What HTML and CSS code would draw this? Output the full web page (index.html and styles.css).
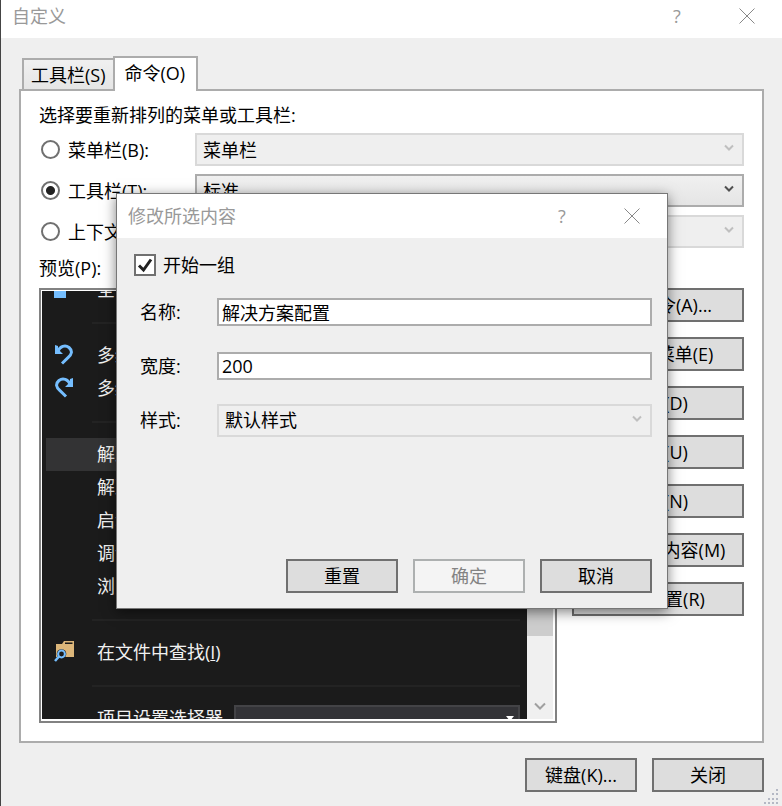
FILE: index.html
```html
<!DOCTYPE html>
<html lang="zh-CN">
<head>
<meta charset="utf-8">
<title>自定义</title>
<link rel="stylesheet" href="styles.css">
</head>
<body>
<main class="window">
  <header class="titlebar">
    <h1 class="title">自定义</h1>
    <button class="caption" type="button" aria-label="帮助">?</button>
    <button class="caption" type="button" aria-label="关闭窗口"><svg width="16" height="16" viewBox="0 0 16 16"><path d="M.5 .5l15 15M15.500 .5l-15 15"/></svg></button>
  </header>

  <div class="content">
    <div class="tabs" role="tablist">
      <button class="tab" type="button" role="tab" aria-selected="false">工具栏(S)</button>
      <button class="tab active" type="button" role="tab" aria-selected="true">命令(O)</button>
    </div>

    <section class="panel">
      <p class="heading">选择要重新排列的菜单或工具栏:</p>
      <div class="targets">
        <label class="choice"><input class="radio" type="radio" name="target"><span>菜单栏(B):</span></label>
        <div class="combo">
          <select aria-label="菜单栏" disabled><option>菜单栏</option></select>
          <svg class="chevron" width="10" height="8" viewBox="0 0 10 8"><path d="M1 1.500l4 4 4-4"/></svg>
        </div>
        <label class="choice"><input class="radio" type="radio" name="target" checked><span>工具栏(T):</span></label>
        <div class="combo">
          <select aria-label="工具栏"><option>标准</option></select>
          <svg class="chevron" width="10" height="8" viewBox="0 0 10 8"><path d="M1 1.500l4 4 4-4"/></svg>
        </div>
        <label class="choice"><input class="radio" type="radio" name="target"><span>上下文菜单(X):</span></label>
        <div class="combo">
          <select aria-label="上下文菜单" disabled><option></option></select>
          <svg class="chevron" width="10" height="8" viewBox="0 0 10 8"><path d="M1 1.500l4 4 4-4"/></svg>
        </div>
      </div>

      <p class="preview-label">预览(P):</p>
      <div class="arrange">
        <div class="preview">
          <div class="viewport">
            <ul class="items">
              <li class="item">
                <svg class="icon" width="20" height="22" viewBox="0 0 20 22"><path fill="#75beff" d="M0 3h12v17H0z"/></svg>
                <span>全部保存(L)</span>
              </li>
              <li class="divider"></li>
              <li class="item">
                <svg class="icon" width="20" height="22" viewBox="0 0 20 22"><path fill="#75beff" d="M1 1l3 1v3l5 5H1z"/><path class="stroke" d="M4 7C6 2.500 11 .5 15 3.500c4 3.500 2.500 7-.5 9.700L8 19.500"/></svg>
                <span>多级撤消(U)</span>
              </li>
              <li class="item">
                <svg class="icon" width="20" height="22" viewBox="0 0 20 22"><path fill="#75beff" d="M19 1l-3 1v3l-5 5h8z"/><path class="stroke" d="M16 7C14 2.500 9 .5 5 3.500c-4 3.500-2.500 7 .5 9.700L12 19.500"/></svg>
                <span>多级重做(R)</span>
              </li>
              <li class="divider"></li>
              <li class="item selected"><span>解决方案配置</span></li>
              <li class="item"><span>解决方案平台</span></li>
              <li class="item"><span>启动项目</span></li>
              <li class="item"><span>调试目标</span></li>
              <li class="item"><span>浏览器</span></li>
              <li class="divider"></li>
              <li class="item">
                <svg class="icon" width="20" height="22" viewBox="0 0 20 22"><path fill="#dcb67a" d="M2 3h6l2-3h10v16H2z"/><path fill="#1b1b1b" d="M11 1.500h7.500V3H11z"/><circle cx="7.500" cy="13" r="4.800" fill="#1b1b1b"/><path d="M0 18l4-3 4 3-2 3H0z" fill="#1b1b1b"/><circle cx="7.500" cy="13" r="3.400" fill="#1b1b1b" stroke="#75beff" stroke-width="2"/><path d="M5 15.500l-4 4.500" stroke="#75beff" stroke-width="2.500"/></svg>
                <span>在文件中查找(<u>I</u>)</span>
              </li>
              <li class="divider"></li>
              <li class="item">
                <span>项目设置选择器</span>
                <span class="dark-combo"><svg width="8" height="5" viewBox="0 0 8 5"><path fill="#fff" d="M0 0h8L4 5z"/></svg></span>
              </li>
            </ul>
          </div>
          <div class="scrollbar">
            <span class="thumb"></span>
            <svg class="scroll-arrow" width="12" height="9" viewBox="0 0 12 9"><path d="M1 1.500l5 5 5-5"/></svg>
          </div>
        </div>
        <div class="actions">
          <button class="button" type="button">添加命令(A)...</button>
          <button class="button" type="button">添加新菜单(E)</button>
          <button class="button" type="button">删除(D)</button>
          <button class="button" type="button">上移(U)</button>
          <button class="button" type="button">下移(N)</button>
          <button class="button" type="button">修改所选内容(M)</button>
          <button class="button" type="button">全部重置(R)</button>
        </div>
      </div>
    </section>

    <footer class="footer">
      <button class="button short" type="button">键盘(K)...</button>
      <button class="button short" type="button">关闭</button>
    </footer>
  </div>
  <svg class="grip" width="16" height="16" viewBox="0 0 16 16"><path fill="#b4b8c4" d="M12 0h2v2h-2zM8 4h2v2H8zM12 4h2v2h-2zM4 9h2v2H4zM8 9h2v2H8zM12 9h2v2h-2zM0 13h2v2H0zM4 13h2v2H4zM8 13h2v2H8zM12 13h2v2h-2z"/></svg>

  <form class="dialog" role="dialog" aria-labelledby="dialog-title">
    <header class="titlebar dialog-bar">
      <h2 class="title" id="dialog-title">修改所选内容</h2>
      <button class="caption" type="button" aria-label="帮助">?</button>
      <button class="caption" type="button" aria-label="关闭对话框"><svg width="16" height="16" viewBox="0 0 16 16"><path d="M.5 .5l15 15M15.500 .5l-15 15"/></svg></button>
    </header>
    <div class="dialog-body">
      <label class="group-start">
        <span class="check"><input type="checkbox" checked><svg width="16" height="16" viewBox="0 0 16 16"><path d="M2 8.500l4.500 4.500L14 2.500"/></svg></span>
        <span>开始一组</span>
      </label>
      <div class="fields">
        <label for="name">名称:</label>
        <input class="text" id="name" type="text" value="解决方案配置">
        <label for="width">宽度:</label>
        <input class="text" id="width" type="text" value="200">
        <label for="style">样式:</label>
        <div class="combo">
          <select id="style" disabled><option>默认样式</option></select>
          <svg class="chevron" width="10" height="8" viewBox="0 0 10 8"><path d="M1 1.500l4 4 4-4"/></svg>
        </div>
      </div>
      <div class="dialog-buttons">
        <button class="button short" type="button">重置</button>
        <button class="button short" type="button" disabled>确定</button>
        <button class="button short" type="button">取消</button>
      </div>
    </div>
  </form>
</main>
</body>
</html>
```
FILE: styles.css
```css
* {
  box-sizing: border-box;
}

body {
  margin: 0;
  background: #efefef;
  color: #000;
  font: 18px/24px "Open Sans", "Noto Sans CJK SC", sans-serif;
}

h1, h2, p, ul {
  margin: 0;
  padding: 0;
  font-size: inherit;
  font-weight: 400;
}

button, input, select {
  margin: 0;
  color: inherit;
  font: inherit;
}

.window {
  position: relative;
  display: flex;
  flex-direction: column;
  height: 100vh;
  min-height: 680px;
  border-left: 1px solid #444;
  overflow: hidden;
}

/* Title bars */
.titlebar {
  display: flex;
  align-items: center;
  height: 38px;
  padding: 0 11px;
  padding-bottom: 7px;
  background: #fff;
  color: #999;
}

.title {
  flex: 1;
}

.caption {
  display: flex;
  align-items: center;
  justify-content: center;
  width: 48px;
  height: 30px;
  margin-left: 22px;
  padding: 0;
  border: 0;
  background: none;
}

.caption path {
  fill: none;
  stroke: #888;
}

/* Tabs and panel */
.content {
  flex: 1;
  display: flex;
  flex-direction: column;
  min-height: 0;
  padding: 18px 18px 14px;
}

.tabs {
  display: flex;
  align-items: flex-end;
  padding-left: 3px;
}

.tab {
  height: 32px;
  margin-bottom: -1px;
  padding: 0 7px;
  border: 2px solid #acacac;
  border-bottom: 0;
  background: linear-gradient(#f0f0f0, #e5e5e5);
}

.tab.active {
  z-index: 1;
  height: 35px;
  margin-left: -2px;
  margin-bottom: -2px;
  padding: 0 11px 4px 10px;
  background: #fff;
}

.panel {
  flex: 1;
  display: flex;
  flex-direction: column;
  min-height: 0;
  padding: 12px 18px 18px;
  border: 2px solid #acacac;
  background: #fff;
}

.targets {
  display: grid;
  grid-template-columns: 156px 1fr;
  row-gap: 8px;
  margin-top: 6px;
}

.choice {
  display: flex;
  align-items: center;
  gap: 8px;
  padding-left: 2px;
  white-space: nowrap;
}

.radio {
  appearance: none;
  flex: none;
  width: 19px;
  height: 19px;
  border: 2px solid #707070;
  border-radius: 50%;
  background: #fff;
}

.radio:checked {
  background: radial-gradient(circle, #222 4px, #fff 5px);
}

.combo {
  position: relative;
  min-width: 0;
}

.combo select {
  appearance: none;
  display: block;
  width: 100%;
  height: 33px;
  padding: 0 28px 0 6px;
  border: 2px solid #acacac;
  border-radius: 0;
  background: linear-gradient(#f0f0f0, #e5e5e5);
  opacity: 1;
}

.combo select:disabled {
  border-color: #d9d9d9;
  background: #efefef;
  color: #000;
}

.chevron {
  position: absolute;
  top: 11px;
  right: 10px;
  pointer-events: none;
}

.chevron path, .scroll-arrow path {
  fill: none;
  stroke: #505050;
  stroke-width: 2;
}

select:disabled + .chevron path {
  stroke: #bfbfbf;
}

.preview-label {
  margin: 8px 0;
}

.arrange {
  flex: 1;
  display: flex;
  gap: 15px;
  min-height: 0;
}

/* Command preview */
.preview {
  flex: 1;
  display: flex;
  min-width: 0;
  padding: 1px 1px 2px;
  border: 2px solid #828282;
}

.viewport {
  flex: 1;
  overflow: hidden;
  background: #1b1b1b;
  color: #f1f1f1;
}

.items {
  margin: -18px 7px 0 4px;
  list-style: none;
}

.item {
  position: relative;
  display: flex;
  align-items: center;
  gap: 11px;
  height: 33px;
  padding-left: 51px;
  padding-bottom: 1px;
  white-space: nowrap;
}

.item.selected {
  background: #333334;
}

.icon {
  position: absolute;
  left: 8px;
}

.stroke {
  fill: none;
  stroke: #75beff;
  stroke-width: 3;
}

.divider {
  height: 33px;
  margin-left: 46px;
  background: linear-gradient(#232323, #232323) center / 100% 2px no-repeat;
}

.dark-combo {
  flex: 1;
  display: flex;
  align-items: center;
  justify-content: flex-end;
  height: 27px;
  padding-right: 4px;
  border: 2px solid #434346;
  background: #333337;
}

.scrollbar {
  display: flex;
  flex-direction: column;
  align-items: center;
  justify-content: space-between;
  width: 27px;
  padding: 26px 1px 8px 0;
  background: linear-gradient(to left, #fff 1px, #f0f0f0 1px);
}

.thumb {
  width: 100%;
  height: 319px;
  background: #cdcdcd;
}

.scroll-arrow path {
  stroke: #a0a0a0;
}

/* Buttons */
.actions {
  display: flex;
  flex-direction: column;
  gap: 15px;
  width: 172px;
}

.button {
  height: 34px;
  padding: 0;
  border: 2px solid #707070;
  background: #ddd;
  white-space: nowrap;
}

.button:disabled {
  border-color: #adb0b0;
  background: #f4f4f4;
  color: #838383;
}

.short {
  width: 112px;
}

.footer, .dialog-buttons {
  display: flex;
  justify-content: flex-end;
  gap: 15px;
}

.footer {
  margin-top: 15px;
}

.grip {
  position: absolute;
  right: 2px;
  bottom: 1px;
}

/* Dialog over the window */
.dialog {
  position: absolute;
  top: 193px;
  left: 115px;
  right: 114px;
  z-index: 2;
  border: 1px solid #777;
  background: #efefef;
  box-shadow: 0 3px 12px rgba(0, 0, 0, .5);
}

.dialog-bar {
  height: 44px;
  padding-bottom: 1px;
}

.dialog-body {
  padding: 15px 15px 15px 17px;
}

.group-start {
  display: flex;
  align-items: center;
  gap: 7px;
}

.check {
  display: grid;
  place-items: center;
}

.check input, .check svg {
  grid-area: 1 / 1;
}

.check input {
  appearance: none;
  width: 22px;
  height: 22px;
  border: 2px solid #707070;
  background: #fff;
}

.check path {
  fill: none;
  stroke: #212121;
  stroke-width: 3;
}

.fields {
  display: grid;
  grid-template-columns: 77px 1fr;
  grid-auto-rows: 54px;
  align-items: center;
  margin: 8px 0 112px;
  padding-left: 6px;
}

.text {
  width: 100%;
  height: 28px;
  padding: 0 3px;
  border: 2px solid #acacac;
  background: #fff;
}
```
